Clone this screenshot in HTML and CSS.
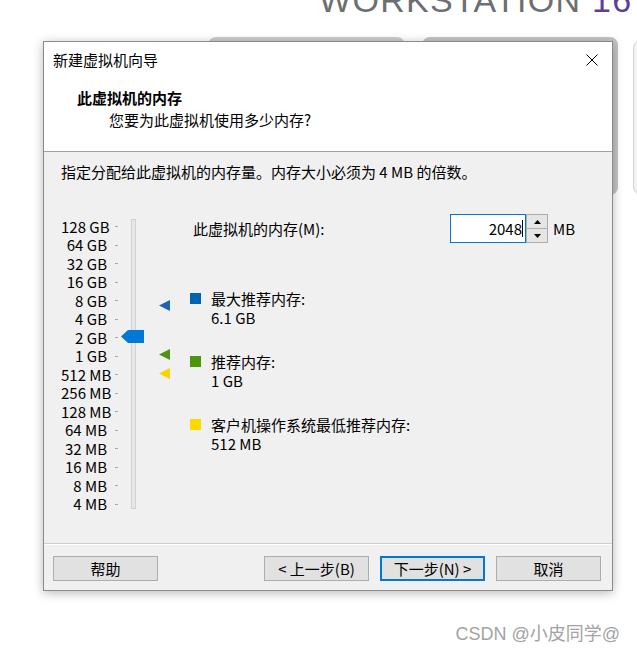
FILE: index.html
```html
<!DOCTYPE html>
<html lang="zh-CN">
<head>
<meta charset="utf-8">
<title>新建虚拟机向导</title>
<link rel="stylesheet" href="styles.css">
</head>
<body>
<div class="page">
  <div class="brand">WORKSTATION <span class="ver">16</span></div>
  <div class="card card1"></div>
  <div class="card card2"></div>
  <div class="card card3"></div>

  <div class="dialog">
    <div class="titlebar">
      <span class="title">新建虚拟机向导</span>
      <svg class="close" width="12" height="12" viewBox="0 0 12 12"><path d="M0.5 0.5 L11.5 11.5 M11.5 0.5 L0.5 11.5" stroke="#000" stroke-width="1" fill="none"/></svg>
    </div>
    <div class="header">
      <div class="h-title">此虚拟机的内存</div>
      <div class="h-sub">您要为此虚拟机使用多少内存?</div>
    </div>
    <div class="content">
      <p class="intro">指定分配给此虚拟机的内存量。内存大小必须为 4 MB 的倍数。</p>
      <div class="main">
        <div class="slider">
          <div class="scale">
            <div class="row"><span class="lbl">128 GB</span><i class="tick"></i></div>
            <div class="row"><span class="lbl">64 GB</span><i class="tick"></i></div>
            <div class="row"><span class="lbl">32 GB</span><i class="tick"></i></div>
            <div class="row"><span class="lbl">16 GB</span><i class="tick"></i></div>
            <div class="row"><span class="lbl">8 GB</span><i class="tick"></i></div>
            <div class="row"><span class="lbl">4 GB</span><i class="tick"></i></div>
            <div class="row"><span class="lbl">2 GB</span><i class="tick"></i></div>
            <div class="row"><span class="lbl">1 GB</span><i class="tick"></i></div>
            <div class="row"><span class="lbl">512 MB</span><i class="tick"></i></div>
            <div class="row"><span class="lbl">256 MB</span><i class="tick"></i></div>
            <div class="row"><span class="lbl">128 MB</span><i class="tick"></i></div>
            <div class="row"><span class="lbl">64 MB</span><i class="tick"></i></div>
            <div class="row"><span class="lbl">32 MB</span><i class="tick"></i></div>
            <div class="row"><span class="lbl">16 MB</span><i class="tick"></i></div>
            <div class="row"><span class="lbl">8 MB</span><i class="tick"></i></div>
            <div class="row"><span class="lbl">4 MB</span><i class="tick"></i></div>
          </div>
          <div class="track"></div>
          <svg class="thumb" width="23" height="13" viewBox="0 0 23 13"><polygon points="0,6.5 7,0 23,0 23,13 7,13" fill="#0078d7"/></svg>
          <svg class="marker m-max" width="11" height="11" viewBox="0 0 11 11"><polygon points="0,5.5 11,0 11,11" fill="#1d64b2"/></svg>
          <svg class="marker m-rec" width="11" height="11" viewBox="0 0 11 11"><polygon points="0,5.5 11,0 11,11" fill="#4c9414"/></svg>
          <svg class="marker m-min" width="11" height="11" viewBox="0 0 11 11"><polygon points="0,5.5 11,0 11,11" fill="#f5d400"/></svg>
        </div>
        <div class="settings">
          <div class="mem-row">
            <span class="mem-label">此虚拟机的内存(M):</span>
            <div class="mem-input"><span class="val">2048</span><span class="caret"></span></div>
            <div class="spin">
              <span class="spin-btn"><svg width="7" height="4" viewBox="0 0 7 4"><polygon points="3.5,0 7,4 0,4" fill="#000"/></svg></span>
              <span class="spin-btn"><svg width="7" height="4" viewBox="0 0 7 4"><polygon points="0,0 7,0 3.5,4" fill="#000"/></svg></span>
            </div>
            <span class="unit">MB</span>
          </div>
          <div class="legend">
            <div class="item"><i class="sq sq-blue"></i><div><div>最大推荐内存:</div><div>6.1 GB</div></div></div>
            <div class="item"><i class="sq sq-green"></i><div><div>推荐内存:</div><div>1 GB</div></div></div>
            <div class="item"><i class="sq sq-yellow"></i><div><div>客户机操作系统最低推荐内存:</div><div>512 MB</div></div></div>
          </div>
        </div>
      </div>
    </div>
    <div class="footer">
      <div class="btn">帮助</div>
      <div class="spacer"></div>
      <div class="btn">&lt; 上一步(B)</div>
      <div class="btn btn-primary">下一步(N) &gt;</div>
      <div class="btn">取消</div>
    </div>
  </div>

  <div class="watermark">CSDN @小皮同学@</div>
</div>
</body>
</html>
```
FILE: styles.css
```css
html, body {
  margin: 0;
  padding: 0;
  background: #fff;
}
body {
  font-family: "Noto Sans CJK SC", sans-serif;
  font-size: 15px;
  color: #000;
}
.page {
  position: relative;
  width: 637px;
  height: 651px;
  overflow: hidden;
  padding-top: 41px;
  box-sizing: border-box;
}

/* background */
.brand {
  position: absolute;
  left: 319px;
  top: -17px;
  font-family: "Liberation Sans", sans-serif;
  font-size: 34px;
  line-height: 34px;
  letter-spacing: 1.3px;
  color: #6d6e71;
  white-space: nowrap;
}
.ver { color: #5d3f9a; }
.card {
  position: absolute;
  border-radius: 8px;
  box-sizing: border-box;
}
.card1 { left: 208px; top: 37px; width: 197px; height: 170px; background: #cdcdcd; }
.card2 { left: 422px; top: 37px; width: 196px; height: 158px; background: #c4c4c4; }
.card3 { left: 633px; top: 40px; width: 200px; height: 155px; background: #f2f2f2; border: 1px solid #d2d2d2; }

/* dialog */
.dialog {
  position: relative;
  z-index: 2;
  margin-left: 43px;
  width: 570px;
  height: 550px;
  box-sizing: border-box;
  border: 1px solid #8a8a8a;
  background: #f0f0f0;
  display: flex;
  flex-direction: column;
  box-shadow: 0 2px 10px rgba(0, 0, 0, 0.28);
}
.titlebar {
  height: 36px;
  background: #fff;
  display: flex;
  align-items: center;
  justify-content: space-between;
  padding: 0 14px 0 9px;
  line-height: 20px;
}
.close { display: block; }
.header {
  background: #fff;
  padding: 10px 0 21px 33px;
  border-bottom: 1px solid #a0a0a0;
}
.h-title { font-weight: bold; line-height: 20px; }
.h-sub { margin-top: 2px; padding-left: 32px; line-height: 20px; }

.content {
  flex: 1;
  padding: 10px 0 0 17px;
}
.intro { margin: 0; line-height: 20px; }
.main {
  display: flex;
  margin-top: 32px;
}

/* slider */
.slider {
  position: relative;
  width: 129px;
  flex: none;
  display: flex;
  align-items: flex-start;
  padding-top: 3.5px;
}
.scale {
  display: flex;
  flex-direction: column;
  width: 57px;
}
.row {
  height: 18.5px;
  display: flex;
  align-items: center;
}
.lbl {
  width: 46px;
  text-align: right;
  line-height: 16px;
  white-space: nowrap;
}
.tick {
  margin-left: 8px;
  width: 3px;
  height: 1px;
  background: #a8a8a8;
}
.track {
  margin-left: 13px;
  margin-top: 1.5px;
  width: 5px;
  height: 290px;
  box-sizing: border-box;
  border: 1px solid #d2d2d2;
  background: #e7e7e7;
}
.thumb { position: absolute; left: 60px; top: 116px; }
.marker { position: absolute; left: 98px; }
.m-max { top: 86px; }
.m-rec { top: 135px; }
.m-min { top: 154px; }

/* settings */
.settings { flex: 1; }
.mem-row {
  display: flex;
  align-items: center;
  height: 29px;
}
.mem-label {
  width: 260px;
  padding-left: 3px;
  box-sizing: border-box;
  line-height: 20px;
}
.mem-input {
  width: 76px;
  height: 29px;
  box-sizing: border-box;
  border: 1px solid #0078d7;
  background: #fff;
  display: flex;
  align-items: center;
  justify-content: flex-end;
  padding-right: 2px;
  line-height: 20px;
}
.caret {
  width: 1px;
  height: 17px;
  background: #000;
}
.spin {
  width: 22px;
  height: 29px;
  display: flex;
  flex-direction: column;
}
.spin-btn {
  flex: 1;
  box-sizing: border-box;
  border: 1px solid #adadad;
  background: #e5e5e5;
  display: flex;
  align-items: center;
  justify-content: center;
}
.spin-btn + .spin-btn { border-top: none; }
.spin-btn svg { display: block; }
.unit { margin-left: 5px; line-height: 20px; }

.legend { margin-top: 45.8px; }
.item {
  display: flex;
  line-height: 19px;
}
.item + .item { margin-top: 25px; }
.sq {
  flex: none;
  width: 11px;
  height: 11px;
  margin-top: 4.5px;
  margin-right: 10px;
}
.sq-blue { background: #0063b1; }
.sq-green { background: #4c940c; }
.sq-yellow { background: #ffd800; }

/* footer */
.footer {
  border-top: 1px solid #cdcdcd;
  box-shadow: inset 0 1px 0 #fff;
  padding: 12px 11px 9px 9px;
  display: flex;
}
.spacer { flex: 1; }
.btn {
  width: 105px;
  height: 25px;
  box-sizing: border-box;
  border: 1px solid #adadad;
  background: #e1e1e1;
  display: flex;
  align-items: center;
  justify-content: center;
  line-height: 20px;
  white-space: nowrap;
}
.btn + .btn { margin-left: 11px; }
.btn-primary { border: 2px solid #0078d7; }

.watermark {
  position: absolute;
  right: 17px;
  top: 622px;
  font-family: "Liberation Sans", "Noto Sans CJK SC", sans-serif;
  font-size: 18px;
  line-height: 24px;
  color: #a3a3a3;
  white-space: nowrap;
}
```
